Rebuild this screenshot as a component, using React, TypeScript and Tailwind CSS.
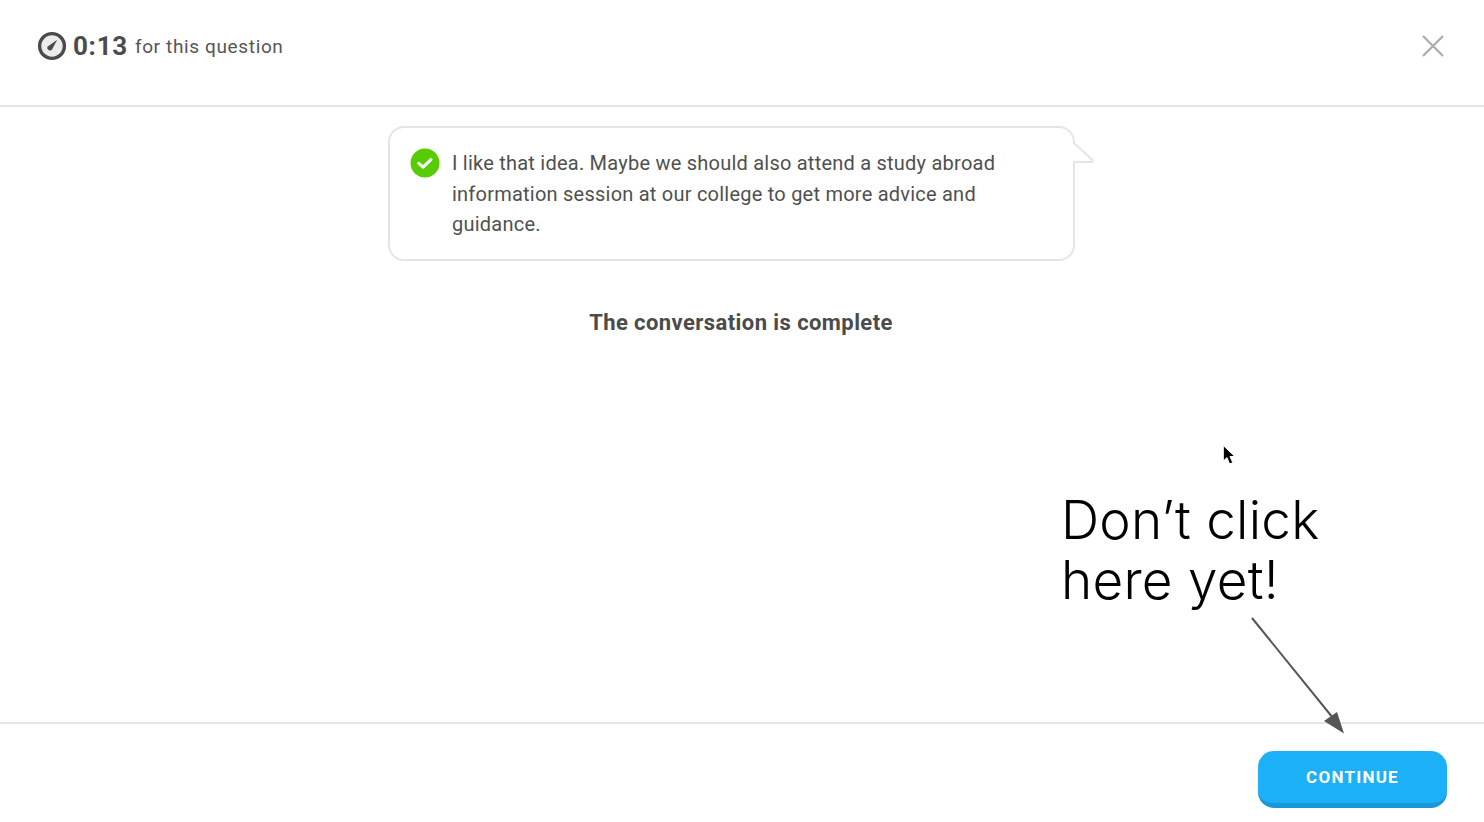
export default function App() {
  return (
    <div className="relative flex h-[822px] w-full flex-col overflow-hidden bg-white text-[#4b4b4b] font-['Roboto','Liberation_Sans',sans-serif]">
      <header className="flex h-[107px] shrink-0 items-center justify-between border-b-2 border-[#e5e5e5] pb-[13px] pl-[37px] pr-[38px]">
        <div className="flex items-center">
          <svg width="30" height="30" viewBox="0 0 30 30" fill="none">
            <circle cx="15" cy="15" r="12.4" stroke="#4b4b4b" strokeWidth="3.4" fill="#ececec" />
            <path d="M10.8 15.4 L20.2 8.8 L15.2 18.2 A2.6 2.6 0 0 1 10.8 15.4 Z" fill="#4b4b4b" />
          </svg>
          <span className="ml-[6px] text-[26px] font-bold leading-none tracking-[0.7px]">0:13</span>
          <span className="ml-[7px] text-[19px] leading-none tracking-[0.64px] text-[#555]">for this question</span>
        </div>
        <svg width="24" height="24" viewBox="0 0 24 24" fill="none" className="mr-[1px]">
          <path d="M2 2 L22 22 M22 2 L2 22" stroke="#ababab" strokeWidth="2.2" />
        </svg>
      </header>

      <main className="flex min-h-0 flex-1 flex-col items-center pt-[19px]">
        <div className="relative w-[708px]">
          <div className="flex h-[135px] w-[687px] items-start rounded-[16px] border-2 border-[#e5e5e5] bg-white pl-[20px] pr-[40px] pt-[20px]">
            <svg width="30" height="30" viewBox="0 0 30 30" className="shrink-0">
              <circle cx="15" cy="15" r="14.5" fill="#58cc02" />
              <path d="M8.8 15.3 L13 19.2 L21 11.6" fill="none" stroke="#fff" strokeWidth="3" strokeLinecap="round" strokeLinejoin="round" />
            </svg>
            <p className="ml-[12px] text-[20px] leading-[30.5px] tracking-[0.23px] text-[#505050]">
              I like that idea. Maybe we should also attend a study abroad
              <br />
              information session at our college to get more advice and
              <br />
              guidance.
            </p>
          </div>
          <svg width="26" height="26" viewBox="0 0 26 26" fill="none" className="absolute left-[683px] top-[14px]">
            <rect x="1.5" y="4.5" width="3" height="16" fill="#fff" />
            <path d="M3 3 L21.5 20 Q22.5 22 20.5 22 L3 22" fill="#fff" stroke="#e5e5e5" strokeWidth="2" strokeLinejoin="round" />
          </svg>
        </div>
        <p className="mr-[2px] mt-[47px] text-[22px] font-bold leading-[30px] tracking-[0.42px] text-[#4b4b4b]">The conversation is complete</p>
      </main>

      <footer className="flex h-[100px] shrink-0 justify-end border-t-2 border-[#e5e5e5] pr-[37px] pt-[27px]">
        <button className="flex h-[57px] w-[189px] items-center justify-center rounded-[16px] border-b-[5px] border-[#1899d6] bg-[#1cb0f6] pt-[2px] text-[17px] font-bold tracking-[1.25px] text-white">
          CONTINUE
        </button>
      </footer>

      <div className="absolute left-[1061px] top-[490px] text-[53px] font-light leading-[60px] tracking-[0.25px] text-black font-['Inter',sans-serif]">
        Don’t click
        <br />
        here yet!
      </div>

      <svg width="110" height="130" viewBox="0 0 110 130" fill="none" className="absolute left-[1245px] top-[610px]">
        <path d="M7 8 L88 108" stroke="#555" strokeWidth="2" />
        <path d="M99 123.5 L79 111 L92 102 Z" fill="#555" />
      </svg>

      <svg width="16" height="22" viewBox="0 0 16 22" className="absolute left-[1221px] top-[444px]">
        <path d="M2.3 1.5 V17 L6 13.6 L8.6 20 L11.8 18.6 L9 12.6 L13.8 12.4 Z" fill="#000" stroke="#fff" strokeWidth="1" strokeLinejoin="round" />
      </svg>
    </div>
  );
}
